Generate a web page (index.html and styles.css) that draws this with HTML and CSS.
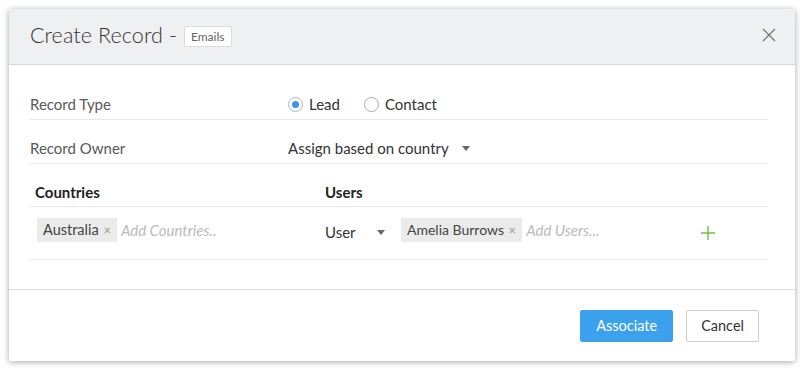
FILE: index.html
```html
<!DOCTYPE html>
<html lang="en">
<head>
    <meta charset="UTF-8">
    <title>Create Record</title>
    <link rel="stylesheet" href="styles.css">
</head>
<body>
<div class="dialog">
    <!-- Header -->
    <div class="dialog-header">
        <h3 class="dialog-title">Create Record -</h3>
        <span class="module-badge">Emails</span>
        <span class="close-button">
            <svg width="14" height="14" viewBox="0 0 14 14"><path d="M1 1L13 13M13 1L1 13" stroke="#777" stroke-width="1.3" fill="none"/></svg>
        </span>
    </div>

    <!-- Body -->
    <div class="dialog-body">
        <div class="form-row">
            <div class="form-label">Record Type</div>
            <div class="form-value">
                <label class="radio checked"><span class="radio-dot"></span>Lead</label>
                <label class="radio"><span class="radio-dot"></span>Contact</label>
            </div>
        </div>
        <div class="form-row">
            <div class="form-label">Record Owner</div>
            <div class="form-value">Assign based on country <span class="caret"></span></div>
        </div>
        <div class="form-row table-head">
            <div class="col-countries">Countries</div>
            <div class="col-users">Users</div>
        </div>
        <div class="form-row rule-row">
            <div class="col-countries">
                <span class="tag">Australia <span class="tag-x">&times;</span></span>
                <span class="placeholder">Add Countries..</span>
            </div>
            <div class="col-users">
                <span class="user-select">User <span class="caret"></span></span>
                <span class="tag">Amelia Burrows <span class="tag-x">&times;</span></span>
                <span class="placeholder">Add Users...</span>
                <span class="add-button">
                    <svg width="16" height="16" viewBox="0 0 16 16"><path d="M8 1V15M1 8H15" stroke="#6cc04a" stroke-width="1.4" fill="none"/></svg>
                </span>
            </div>
        </div>
    </div>

    <!-- Footer -->
    <div class="dialog-footer">
        <button class="btn btn-primary">Associate</button>
        <button class="btn">Cancel</button>
    </div>
</div>
</body>
</html>
```

FILE: styles.css
```css
body { margin: 0; padding: 9px; background: #fff; font-family: Lato, "Open Sans", Arial, sans-serif; color: #333; }
.dialog { width: 786px; background: #fff; box-shadow: 0 1px 6px rgba(0,0,0,0.35); border-radius: 2px; }
.dialog-header { height: 52px; background: #eff0f2; border-bottom: 1px solid #d4d5d7; display: flex; align-items: center; padding: 0 19px 3px 21px; }
.dialog-title { margin: 0; font-size: 21.5px; font-weight: 300; color: #333; letter-spacing: 0.1px; }
.module-badge { margin-left: 7px; margin-top: 2px; font-size: 12px; color: #666; background: #fff; border: 1px solid #dcdcdc; padding: 2px 6px; border-radius: 2px; }
.close-button { margin-left: auto; display: flex; }
.dialog-body { padding: 11px 27px 29px 21px; }
.form-row { display: flex; align-items: center; border-bottom: 1px solid #e8e8e8; padding: 18px 0 5px; line-height: 20px; font-size: 15px; }
.form-label { width: 258px; color: #595959; }
.form-value { display: flex; align-items: center; color: #333; }
.radio { display: flex; align-items: center; margin-right: 24px; }
.radio-dot { width: 13px; height: 13px; border: 1px solid #aaa; border-radius: 50%; margin-right: 6px; position: relative; background: #fff; }
.radio.checked .radio-dot { border-color: #9fb8cf; }
.radio.checked .radio-dot::after { content: ""; position: absolute; left: 3px; top: 3px; width: 7px; height: 7px; border-radius: 50%; background: #3d94ee; }
.caret { display: inline-block; width: 0; height: 0; border-left: 4.5px solid transparent; border-right: 4.5px solid transparent; border-top: 5px solid #666; margin-left: 13px; }
.table-head { font-weight: 700; color: #222; padding-bottom: 4px; }
.col-countries { width: 295px; display: flex; align-items: center; }
.table-head .col-countries { padding-left: 5px; width: 290px; }
.col-users { flex: 1; display: flex; align-items: center; }
.rule-row { padding: 11px 0 17px; }
.rule-row .col-countries { padding-left: 7px; width: 288px; }
.tag { background: #ebebeb; color: #444; padding: 2px 6px; line-height: 20px; font-size: 14.5px; }
.tag-x { color: #999; font-size: 13px; margin-left: 1px; }
.col-users .tag { font-size: 14px; }
.placeholder { color: #bbb; font-style: italic; margin-left: 4px; font-size: 15px; }
.user-select { display: flex; align-items: center; margin-top: 4px; width: 76px; }
.user-select .caret { margin-left: 21px; }
.add-button { margin-left: auto; margin-right: 52px; margin-top: 6px; display: flex; }
.dialog-footer { border-top: 1px solid #ddd; height: 71px; display: flex; align-items: center; justify-content: flex-end; padding: 0 36px 0 21px; gap: 13px; }
.btn { height: 32px; padding: 0 14px; font-family: inherit; font-size: 14.5px; border: 1px solid #ccc; background: #fff; color: #333; border-radius: 2px; cursor: pointer; }
.btn-primary { background: #3ba1ee; border-color: #3ba1ee; color: #fff; padding: 0 15px; }
```
